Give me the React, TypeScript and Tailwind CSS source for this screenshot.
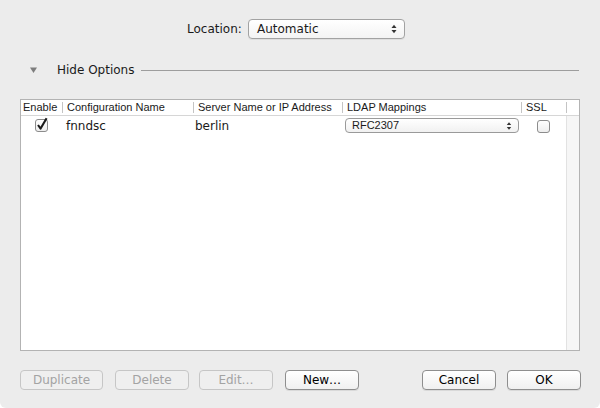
import React from 'react';

const UpDown: React.FC<{ className?: string }> = ({ className }) => (
  <svg width="6" height="10" viewBox="0 0 6 10" className={className}>
    <path d="M0.5 4 L3 0.8 L5.5 4 Z" fill="#333" />
    <path d="M0.5 6 L3 9.2 L5.5 6 Z" fill="#333" />
  </svg>
);

const CheckBox: React.FC<{ checked?: boolean }> = ({ checked }) => (
  <svg width="16" height="15" viewBox="0 0 16 15" className="overflow-visible">
    <defs>
      <linearGradient id="cbg" x1="0" y1="0" x2="0" y2="1">
        <stop offset="0" stopColor="#ffffff" />
        <stop offset="1" stopColor="#ededed" />
      </linearGradient>
    </defs>
    <rect x="1.5" y="2.5" width="12" height="12" rx="2.5" fill="url(#cbg)" stroke="#8c8c8c" />
    {checked && (
      <path d="M4 8 L6.6 11.6 L12.6 1.2" fill="none" stroke="#1a1a1a" strokeWidth="2.1" strokeLinejoin="round" />
    )}
  </svg>
);

const Button: React.FC<{ label: string; disabled?: boolean; className?: string }> = ({ label, disabled, className }) => (
  <div
    className={`h-[20px] w-[74px] rounded-[4px] border flex items-center justify-center text-[12px] ${
      disabled
        ? 'border-[#c6c6c6] bg-[#efefef] text-[#a3a3a3]'
        : 'border-[#8e8e8e] bg-gradient-to-b from-white to-[#f0f0f0] text-black shadow-[0_1px_0_rgba(0,0,0,0.08)]'
    } ${className ?? ''}`}
  >
    {label}
  </div>
);

const headers = [
  { label: 'Enable', w: 'w-[41px]', sep: false },
  { label: 'Configuration Name', w: 'w-[131px]', sep: true },
  { label: 'Server Name or IP Address', w: 'w-[149px]', sep: true },
  { label: 'LDAP Mappings', w: 'w-[179px]', sep: true },
  { label: 'SSL', w: 'w-[45px]', sep: true },
];

export default function App() {
  return (
    <div className="w-[600px] h-[408px] bg-white">
      <div
        className="w-[600px] h-[408px] bg-[#ececec] rounded-b-[6px] overflow-hidden text-[#1a1a1a] flex flex-col"
        style={{ fontFamily: '"DejaVu Sans", sans-serif' }}
      >
        {/* Location */}
        <div className="flex items-center pt-[19px] pl-[187px]">
          <span className="text-[12px] w-[61px]">Location:</span>
          <div className="h-[20px] w-[157px] rounded-[4px] border border-[#a2a2a2] bg-gradient-to-b from-white to-[#f3f3f3] shadow-[0_1px_0_rgba(0,0,0,0.06)] flex items-center justify-between pl-[8px] pr-[7px] text-[12px]">
            <span>Automatic</span>
            <UpDown />
          </div>
        </div>

        {/* Hide Options */}
        <div className="flex items-center h-[16px] mt-[23px]">
          <svg width="7" height="6" viewBox="0 0 7 6" className="ml-[30px]">
            <path d="M0 0.5 L7 0.5 L3.5 6 Z" fill="#7d7d7d" />
          </svg>
          <span className="text-[12px] ml-[20px]">Hide Options</span>
          <div className="ml-[7px] w-[438px] h-px bg-[#9d9d9d]" />
        </div>

        {/* Table */}
        <div
          className="mt-[21px] mx-[20px] h-[252px] border border-[#b3b3b3] bg-white flex flex-col"
          style={{ fontFamily: '"Liberation Sans", sans-serif' }}
        >
          <div className="h-[16px] flex items-center border-b border-[#d6d6d6] text-[11px] text-[#1a1a1a]">
            {headers.map((h) => (
              <div key={h.label} className={`${h.w} h-full flex items-center`}>
                {h.sep && <div className="w-px h-[11px] bg-[#c4c4c4]" />}
                <span className={h.sep ? 'ml-[4px]' : 'ml-[2px]'}>{h.label}</span>
              </div>
            ))}
            <div className="w-px h-[11px] bg-[#c4c4c4]" />
          </div>
          <div className="flex-1 flex">
            <div className="w-[545px] flex flex-col">
              <div className="h-[19px] flex items-center text-[12px]" style={{ fontFamily: '"DejaVu Sans", sans-serif' }}>
                <div className="w-[41px] flex pl-[13px] -mt-[2px]">
                  <CheckBox checked />
                </div>
                <div className="w-[131px] pl-[4px]">fnndsc</div>
                <div className="w-[149px] pl-[2px]">berlin</div>
                <div className="w-[179px] pl-[3px]">
                  <div
                    className="h-[15px] w-[174px] rounded-[4px] border border-[#9a9a9a] bg-gradient-to-b from-white to-[#f1f1f1] flex items-center justify-between pl-[6px] pr-[6px] text-[11px]"
                    style={{ fontFamily: '"Liberation Sans", sans-serif' }}
                  >
                    <span>RFC2307</span>
                    <UpDown className="scale-90" />
                  </div>
                </div>
                <div className="w-[45px] pl-[15px] flex">
                  <CheckBox />
                </div>
              </div>
            </div>
            <div className="flex-1 bg-[#f6f6f6] border-l border-[#e2e2e2]" />
          </div>
        </div>

        {/* Buttons */}
        <div className="flex items-center mt-[19px] pl-[20px]">
          <Button label="Duplicate" disabled className="w-[83px]" />
          <Button label="Delete" disabled className="ml-[12px]" />
          <Button label="Edit…" disabled className="ml-[10px]" />
          <Button label="New…" className="ml-[12px]" />
          <Button label="Cancel" className="ml-[63px]" />
          <Button label="OK" className="ml-[11px]" />
        </div>
      </div>
    </div>
  );
}
